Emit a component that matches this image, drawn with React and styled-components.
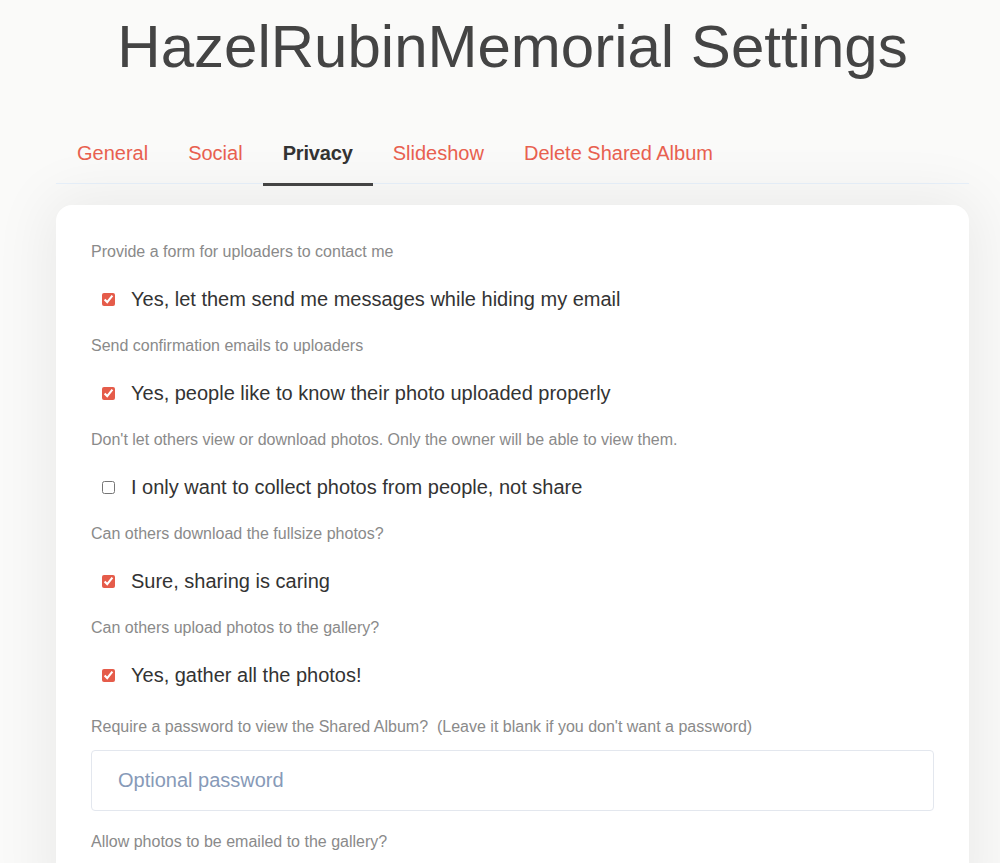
import React, { useState } from "react";
import styled, { createGlobalStyle } from "styled-components";

const Global = createGlobalStyle`
  html, body { margin: 0; padding: 0; background: #fafaf9; }
  body { font-family: "Liberation Sans", Arial, sans-serif; overflow: hidden; }
  * { box-sizing: border-box; }
`;

const Page = styled.div`
  width: 1025px;
  padding: 0 56px;
  min-height: 863px;
`;

const Title = styled.h1`
  margin: 12px 0 0;
  font-size: 60px;
  font-weight: 400;
  line-height: 69px;
  color: #444;
  text-align: center;
`;

const TabBar = styled.nav`
  display: flex;
  margin-top: 43px;
  padding-left: 1px;
  height: 60px;
  border-bottom: 1px solid #e8f1fb;
`;

const Tab = styled.a`
  display: block;
  padding: 18px 20px 0;
  height: 62px;
  font-size: 20px;
  line-height: 23px;
  text-decoration: none;
  cursor: pointer;
  color: ${(p) => (p.$active ? "#333" : "#e8604f")};
  font-weight: ${(p) => (p.$active ? 700 : 400)};
  letter-spacing: ${(p) => (p.$active ? "-0.15px" : "0")};
  border-bottom: 3px solid ${(p) => (p.$active ? "#444" : "transparent")};
  position: relative;
  z-index: 1;
`;

const Card = styled.section`
  margin-top: 21px;
  background: #fff;
  border-radius: 16px;
  padding: 37px 35px 60px;
  box-shadow: 0 0 60px 8px rgba(0, 0, 0, 0.065);
`;

const Label = styled.div`
  font-size: 16px;
  line-height: 20px;
  color: #8a8a8a;
  margin-top: ${(p) => p.$mt || 0}px;
  white-space: pre;
`;

const Row = styled.label`
  display: flex;
  align-items: center;
  gap: 16px;
  padding: 26px 0 26px 11px;
  font-size: 20px;
  line-height: 22px;
  color: #333;
  cursor: pointer;
`;

const Check = styled.input.attrs({ type: "checkbox" })`
  width: 13px;
  height: 13px;
  margin: 0;
  accent-color: #e55c4a;
`;

const PasswordInput = styled.input`
  display: block;
  width: 100%;
  height: 61px;
  margin-top: 13px;
  padding: 0 26px;
  border: 1px solid #e3e7ee;
  border-radius: 4px;
  font-family: "Liberation Sans", Arial, sans-serif;
  font-size: 20px;
  color: #333;
  outline: none;
  &::placeholder { color: #879ab8; }
`;

const tabs = ["General", "Social", "Privacy", "Slideshow", "Delete Shared Album"];

const options = [
  { q: "Provide a form for uploaders to contact me", a: "Yes, let them send me messages while hiding my email", on: true },
  { q: "Send confirmation emails to uploaders", a: "Yes, people like to know their photo uploaded properly", on: true },
  { q: "Don't let others view or download photos. Only the owner will be able to view them.", a: "I only want to collect photos from people, not share", on: false },
  { q: "Can others download the fullsize photos?", a: "Sure, sharing is caring", on: true },
  { q: "Can others upload photos to the gallery?", a: "Yes, gather all the photos!", on: true },
];

export default function App() {
  const [vals, setVals] = useState(options.map((o) => o.on));
  return (
    <Page>
      <Global />
      <Title>HazelRubinMemorial Settings</Title>
      <TabBar>
        {tabs.map((t) => (
          <Tab key={t} $active={t === "Privacy"}>{t}</Tab>
        ))}
      </TabBar>
      <Card>
        {options.map((o, i) => (
          <React.Fragment key={o.q}>
            <Label>{o.q}</Label>
            <Row>
              <Check
                checked={vals[i]}
                onChange={() => setVals(vals.map((v, j) => (j === i ? !v : v)))}
              />
              {o.a}
            </Row>
          </React.Fragment>
        ))}
        <Label $mt={5}>{"Require a password to view the Shared Album?  (Leave it blank if you don't want a password)"}</Label>
        <PasswordInput type="password" placeholder="Optional password" />
        <Label $mt={21}>Allow photos to be emailed to the gallery?</Label>
      </Card>
    </Page>
  );
}
